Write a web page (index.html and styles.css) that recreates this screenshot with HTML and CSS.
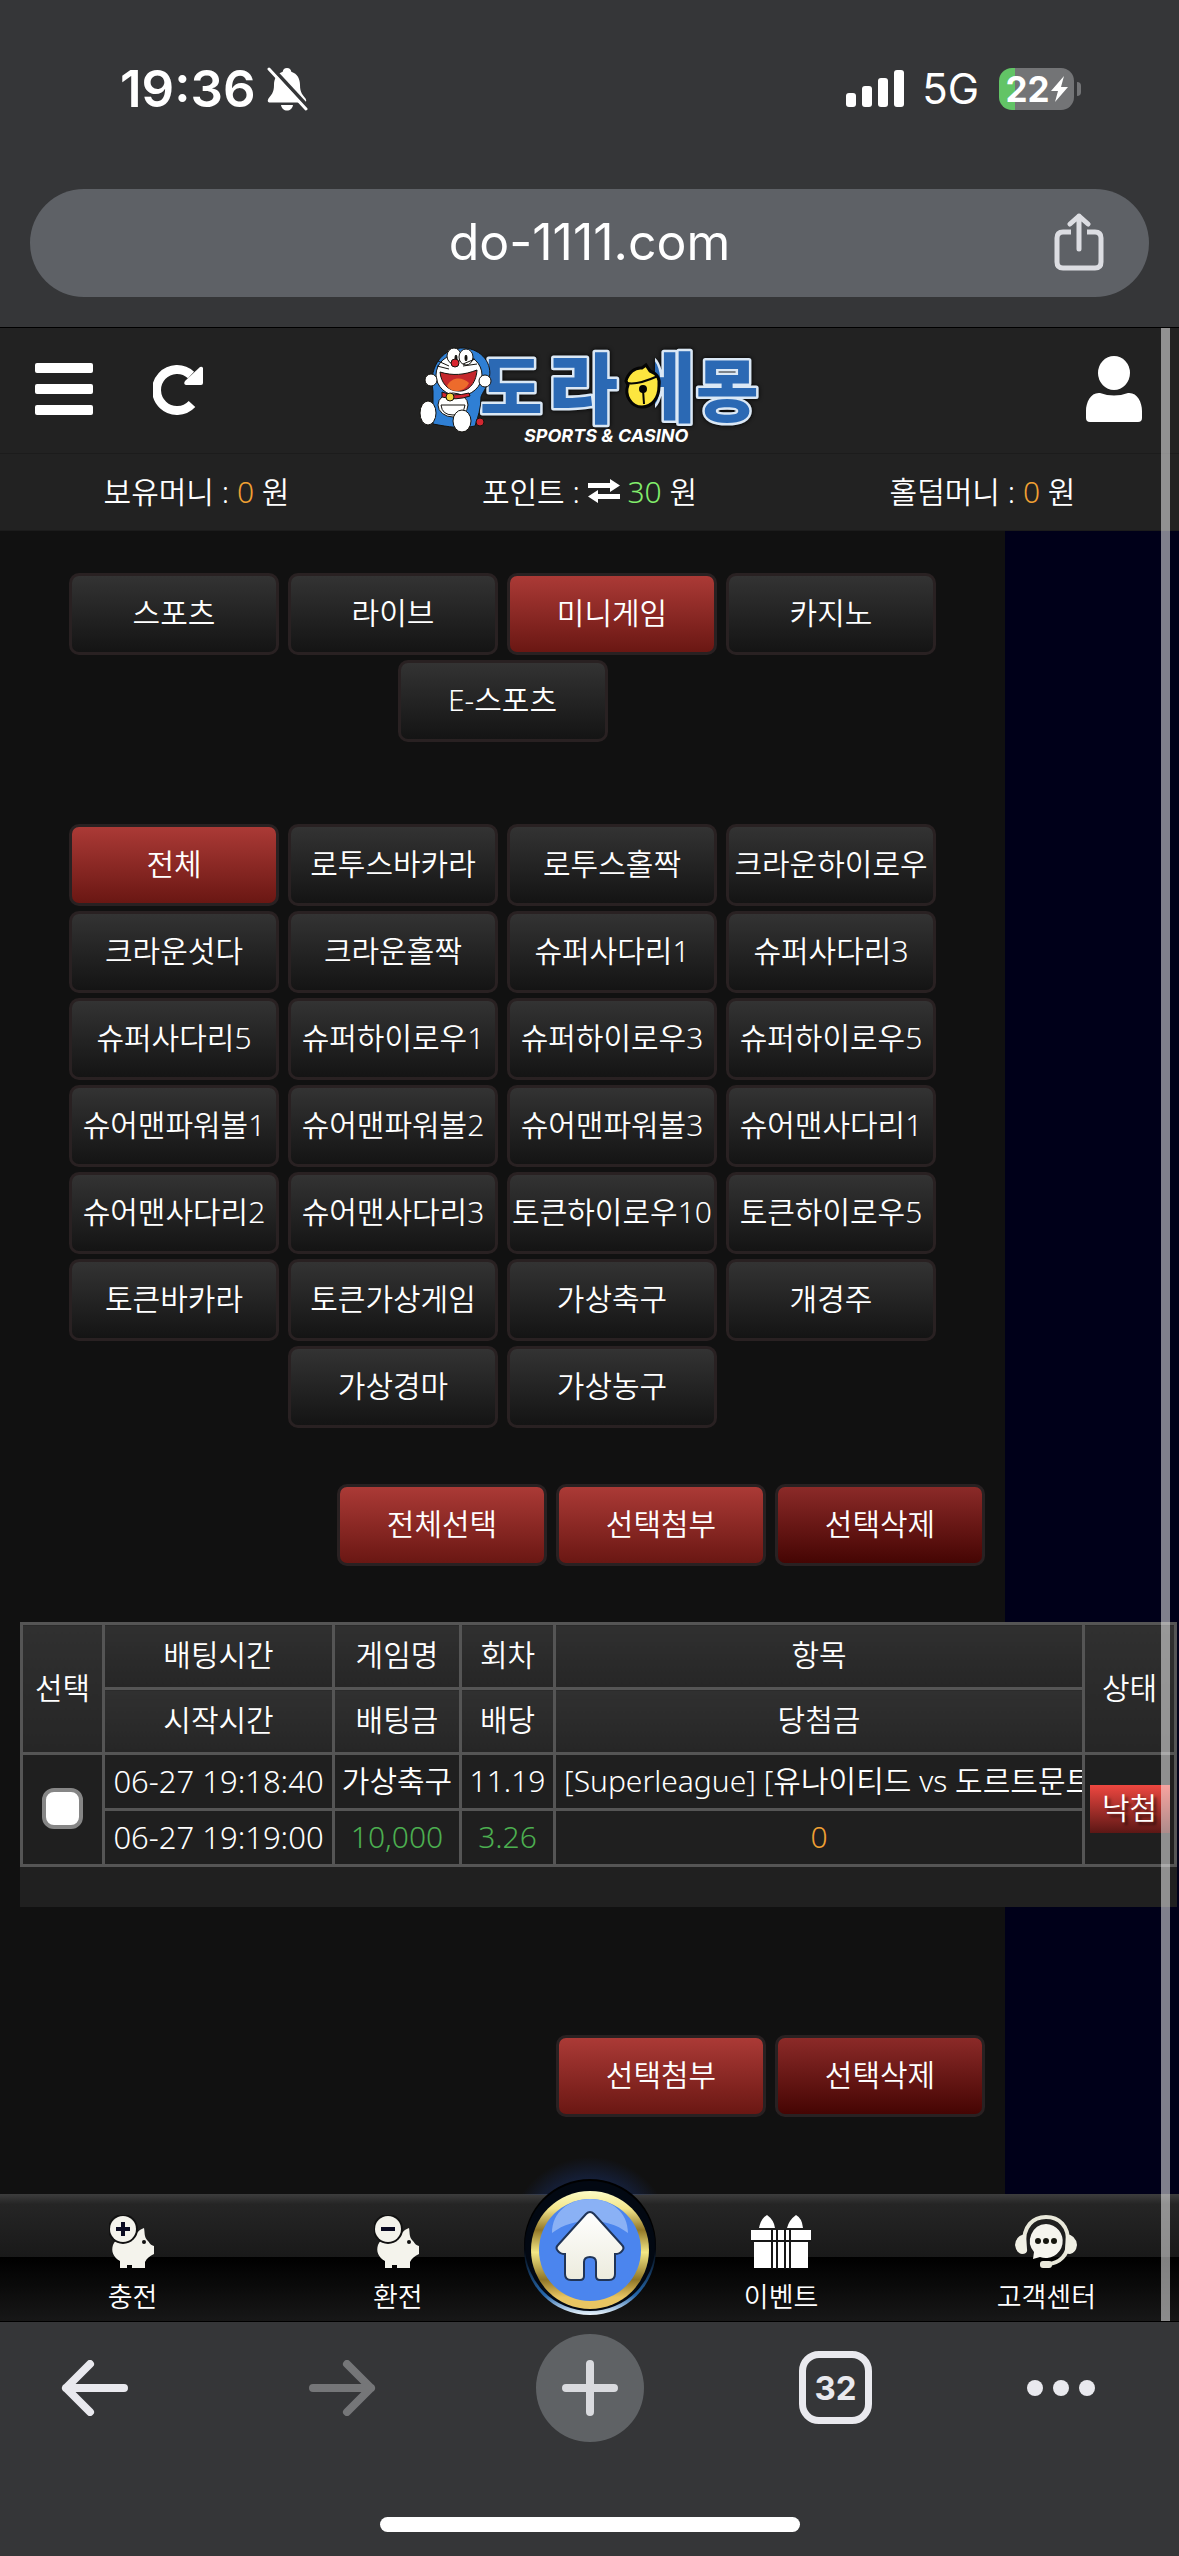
FILE: index.html
```html
<!DOCTYPE html>
<html lang="ko">
<head>
<meta charset="utf-8">
<meta name="viewport" content="width=device-width, initial-scale=1">
<title>do-1111.com</title>
<link rel="stylesheet" href="styles.css">
</head>
<body>
<div class="phone">
  <div class="status">
    <div class="status-group">
      <span class="time">19:36</span>
      <svg class="bell-off" viewBox="0 0 42 44" aria-hidden="true"><path d="M21 1c-2.600 0-4 1.700-4.300 3.800C10.500 6.800 8 12 8 18c0 8-3 10-5.500 13.500C1 34 2 35.500 4 35.500h34c2 0 3-1.500 1.500-4C37 28 34 26 34 18c0-6-2.500-11.200-8.700-13.200C25 2.700 23.600 1 21 1z" fill="#fff"/><path d="M15 38h12c-.5 3.500-3 5.500-6 5.500s-5.500-2-6-5.500z" fill="#fff"/><path d="M6 1l36 39" stroke="#353638" stroke-width="4"/><path d="M3 2l37 40" stroke="#fff" stroke-width="3" stroke-linecap="round"/></svg>
    </div>
    <div class="status-group">
      <svg class="signal" viewBox="0 0 58 38" aria-hidden="true" fill="#fff"><rect x="0" y="23" width="10" height="14" rx="3"/><rect x="16" y="16" width="10" height="21" rx="3"/><rect x="32" y="8" width="10" height="29" rx="3"/><rect x="48" y="0" width="10" height="37" rx="3"/></svg>
      <span class="network">5G</span>
      <span class="battery"><span>22</span><svg viewBox="0 0 17 26" aria-hidden="true"><path d="M13 0L0 15h7L4 26 17 11h-7z" fill="#fff"/></svg></span>
    </div>
  </div>
  <div class="address">
    <span class="url">do-1111.com</span>
    <button class="icon-btn share" aria-label="공유"><svg viewBox="0 0 50 58" fill="none" stroke="#dcdde2" stroke-width="5" stroke-linecap="round" stroke-linejoin="round"><path d="M17 19H9q-6 0-6 6v24q0 6 6 6h32q6 0 6-6V25q0-6-6-6h-8" stroke-linecap="butt"/><path d="M25 36V3M16 11L25 3l9 8"/></svg></button>
  </div>

  <div class="site">
    <header class="header">
      <div class="header-side">
        <button class="icon-btn menu" aria-label="메뉴"><svg viewBox="0 0 58 52" fill="#fff"><rect width="58" height="10" rx="2"/><rect y="21" width="58" height="10" rx="2"/><rect y="42" width="58" height="10" rx="2"/></svg></button>
        <button class="icon-btn reload" aria-label="새로고침"><svg viewBox="0 0 52 52"><path d="M38 12A20.500 20.500 0 1 0 39 41" fill="none" stroke="#fff" stroke-width="9"/><path d="M50 5v15q0 2-2 2H33q-3-1-1-4L47 4q2-1 3 1z" fill="#fff"/></svg></button>
      </div>
      <a class="logo" href="#" aria-label="도라에몽">
        <svg viewBox="0 0 338 100">
          <clipPath id="stem"><path d="M235-10h60v110h-60z"/></clipPath>
          <g class="logo-word">
            <text x="60" y="67">도</text><text class="wide" x="128" y="71">라</text><g clip-path="url(#stem)"><text class="wide" x="206" y="70">에</text></g><text x="276" y="70">몽</text>
          </g>
          <g stroke="#050505" stroke-width="2" fill="#fde63f"><path d="M206 35c2-8 9-14 16-13l4-3 4 6c8 3 10 9 9 15 0 12-7 21-17 21-11 0-18-12-14-22z" stroke-width="3"/><path d="M207 37c8 2 22-3 31-7" fill="none"/><circle cx="223" cy="43" r="3" fill="#050505"/><path d="M223 44l1 14"/></g>
          <g stroke="#15130f" stroke-width="1">
            <path d="M13 45C8 18 25 1 44 2c18 1 29 16 25 31-1 7-7 14-8 18 0 11-3 20-6 29-14 3-26 1-42-2z" fill="#2f7fd4"/>
            <ellipse cx="39" cy="29" rx="23" ry="21" fill="#fff"/>
            <ellipse cx="34" cy="10" rx="7" ry="8" fill="#fff"/><ellipse cx="46" cy="11" rx="7" ry="8" fill="#fff"/>
            <ellipse cx="36" cy="12" rx="1" ry="3"/><ellipse cx="46" cy="12" rx="1" ry="3"/>
            <circle cx="35" cy="17" r="4" fill="#d92530"/>
            <path d="M20 26c13 4 24 3 37-2-1 15-10 22-19 21-10 0-17-8-18-19z" fill="#c5272c"/>
            <path d="M27 40c4-9 15-10 22-3-4 9-17 11-22 3z" fill="#ed6b2c" stroke="none"/>
            <path d="M17 20l12 3M18 15l11 5M43 20l14-2M43 18l12-5" fill="none"/>
            <circle cx="11" cy="34" r="6" fill="#fff"/><circle cx="65" cy="35" r="6" fill="#fff"/>
            <ellipse cx="33" cy="59" rx="15" ry="12" fill="#fff"/>
            <path d="M21 59h24q-1 10-12 10T21 59z" fill="#fff"/>
            <path d="M22 46q12 5 27 1l1 3q-14 5-28 1z" fill="#d12731"/>
            <circle cx="30" cy="51" r="4" fill="#f3d43b"/>
            <ellipse cx="8" cy="67" rx="8" ry="12" fill="#fff"/><ellipse cx="42" cy="75" rx="9" ry="11" fill="#fff"/>
            <circle cx="60" cy="76" r="4" fill="#d12731"/>
          </g>
          <text class="logo-sub" x="104" y="96">SPORTS &amp; CASINO</text>
        </svg>
      </a>
      <div class="header-side header-right">
        <button class="icon-btn user" aria-label="내 정보"><svg viewBox="0 0 56 66" fill="#fff"><ellipse cx="28" cy="17" rx="16" ry="17"/><path d="M14 37q14 5 28 0c9-1 14 9 14 18v7q0 4-4 4H4q-4 0-4-4v-7c0-9 5-19 14-18z"/></svg></button>
      </div>
    </header>
    <div class="wallet">
      <span>보유머니 : <b class="orange">0</b> 원</span>
      <span>포인트 : <svg class="swap" viewBox="0 0 32 24" fill="#fff" aria-hidden="true"><path d="M0 4h22V0l10 6.500L22 13V9H0zM32 15H10v-4L0 17.500 10 24v-4h22z"/></svg> <b class="lime">30</b> 원</span>
      <span>홀덤머니 : <b class="orange">0</b> 원</span>
    </div>
    <main class="content">
      <div class="panel">
        <nav class="chips">
          <button class="btn">스포츠</button><button class="btn">라이브</button><button class="btn red">미니게임</button><button class="btn">카지노</button><button class="btn">E-스포츠</button>
        </nav>
        <nav class="chips games">
          <button class="btn red">전체</button><button class="btn">로투스바카라</button><button class="btn">로투스홀짝</button><button class="btn">크라운하이로우</button>
          <button class="btn">크라운섯다</button><button class="btn">크라운홀짝</button><button class="btn">슈퍼사다리1</button><button class="btn">슈퍼사다리3</button>
          <button class="btn">슈퍼사다리5</button><button class="btn">슈퍼하이로우1</button><button class="btn">슈퍼하이로우3</button><button class="btn">슈퍼하이로우5</button>
          <button class="btn">슈어맨파워볼1</button><button class="btn">슈어맨파워볼2</button><button class="btn">슈어맨파워볼3</button><button class="btn">슈어맨사다리1</button>
          <button class="btn">슈어맨사다리2</button><button class="btn">슈어맨사다리3</button><button class="btn">토큰하이로우10</button><button class="btn">토큰하이로우5</button>
          <button class="btn">토큰바카라</button><button class="btn">토큰가상게임</button><button class="btn">가상축구</button><button class="btn">개경주</button>
          <button class="btn">가상경마</button><button class="btn">가상농구</button>
        </nav>
        <div class="actions">
          <button class="btn red">전체선택</button><button class="btn red">선택첨부</button><button class="btn dark-red">선택삭제</button>
        </div>
      </div>
      <div class="table-wrap">
        <table class="bets">
          <colgroup><col class="c-check"><col class="c-time"><col class="c-game"><col class="c-round"><col><col class="c-state"></colgroup>
          <thead>
            <tr><th rowspan="2">선택</th><th>배팅시간</th><th>게임명</th><th>회차</th><th>항목</th><th rowspan="2">상태</th></tr>
            <tr><th>시작시간</th><th>배팅금</th><th>배당</th><th>당첨금</th></tr>
          </thead>
          <tbody>
            <tr><td rowspan="2"><input class="check" type="checkbox" aria-label="선택"></td><td class="when">06-27 19:18:40</td><td>가상축구</td><td>11.19</td><td class="item"><div>[Superleague] [유나이티드 vs 도르트문트]</div></td><td rowspan="2"><span class="lost">낙첨</span></td></tr>
            <tr><td class="when">06-27 19:19:00</td><td class="green">10,000</td><td class="green">3.26</td><td class="orange">0</td></tr>
          </tbody>
        </table>
      </div>
      <div class="panel lower">
        <div class="actions">
          <button class="btn red">선택첨부</button><button class="btn dark-red">선택삭제</button>
        </div>
      </div>
    </main>
    <nav class="tabs">
      <a href="#"><svg class="pig" viewBox="0 0 48 54" aria-hidden="true"><path d="M4 30c3-7 10-9 17-9 6 1 7-6 14-8 1 5 0 8 3 12 3 3 3 5 7 6v8c-4 2-7 4-9 8v6H23v-3h-5v3H11v-7C4 42 2 36 4 30z" fill="#f4f3ec"/><circle cx="35" cy="27" r="2" fill="#111"/><circle cx="14" cy="14" r="15" fill="#111"/><circle cx="14" cy="14" r="13" fill="#f4f3ec"/><path d="M14 7v14M7 14h14" stroke="#0b0b22" stroke-width="4"/></svg><span>충전</span></a>
      <a href="#"><svg class="pig" viewBox="0 0 48 54" aria-hidden="true"><path d="M4 30c3-7 10-9 17-9 6 1 7-6 14-8 1 5 0 8 3 12 3 3 3 5 7 6v8c-4 2-7 4-9 8v6H23v-3h-5v3H11v-7C4 42 2 36 4 30z" fill="#f4f3ec"/><circle cx="35" cy="27" r="2" fill="#111"/><circle cx="14" cy="14" r="15" fill="#111"/><circle cx="14" cy="14" r="13" fill="#f4f3ec"/><path d="M7 14h14" stroke="#0b0b22" stroke-width="4"/></svg><span>환전</span></a>
      <a href="#" class="home" aria-label="홈"><svg viewBox="0 0 180 160">
        <defs>
          <radialGradient id="glow"><stop offset=".6" stop-color="#1d3b86"/><stop offset="1" stop-color="#1d3b86" stop-opacity="0"/></radialGradient>
          <linearGradient id="rim" x2="0" y2="1"><stop offset=".5" stop-color="#02050b"/><stop offset=".85" stop-color="#2668ad"/><stop offset="1" stop-color="#eef8ff"/></linearGradient>
          <linearGradient id="gold" x2="0" y2="1"><stop offset="0" stop-color="#fdfcc5"/><stop offset=".15" stop-color="#f3e58b"/><stop offset=".33" stop-color="#927727"/><stop offset=".52" stop-color="#f4e884"/><stop offset=".75" stop-color="#8f7527"/><stop offset=".9" stop-color="#e8c562"/></linearGradient>
          <linearGradient id="house" x2="0" y2="1"><stop offset="0" stop-color="#fff"/><stop offset="1" stop-color="#ecebdd"/></linearGradient>
          <clipPath id="above"><path d="M0-20h180v54H0z"/></clipPath>
        </defs>
        <circle cx="90" cy="78" r="82" fill="url(#glow)" opacity=".5" clip-path="url(#above)"/><circle cx="90" cy="84" r="66" fill="#000"/>
        <circle cx="90" cy="88" r="66" fill="url(#rim)"/><circle cx="90" cy="85" r="65" fill="#020812"/>
        <circle cx="90" cy="89" r="59" fill="url(#gold)"/><circle cx="90" cy="89" r="51" fill="#4b85ee"/>
        <path d="M52 72c0-21 17-34 38-34s38 13 38 34c-12-9-24-12-38-12s-26 3-38 12z" fill="#8ab1f5"/>
        <path d="M86 53q4-4 8 0l28 31q3 3 0 6-2 3-7 3v20q0 6-6 6h-9q-4 0-4-4V101q0-5-6-5t-6 5v14q0 4-4 4h-9q-6 0-6-6V93q-5 0-7-3-3-3 0-6z" fill="url(#house)" stroke="#203457" stroke-width="2"/>
      </svg></a>
      <a href="#"><svg class="gift" viewBox="0 0 60 54" aria-hidden="true" fill="#fff"><path d="M8 13q2-10 8-13 7 5 8 13zM36 13q2-8 9-13 6 3 7 13z"/><path d="M0 15h60v10H0z"/><path d="M3 27h54v26H3z"/><path d="M21 14v40M26 14v40M34 14v40M39 14v40M0 26h60" stroke="#171717" stroke-width="2"/></svg><span>이벤트</span></a>
      <a href="#"><svg class="support" viewBox="0 0 62 54" aria-hidden="true"><path d="M9 30C8 11 18 2 31 2s23 9 22 26c0 12-8 20-20 21" fill="none" stroke="#e9e8da" stroke-width="4"/><path d="M11 19q-10 1-11 11 1 8 7 9 6 0 5-5zM51 19q10 1 11 11-1 8-7 9-6 0-5-5z" fill="#f0efe4"/><rect x="25" y="46" width="12" height="7" rx="3" fill="#e9e8da"/><path d="M31 9a17 17 0 1 1-6 33l-7 2 1-7A17 17 0 0 1 31 9z" fill="#f5f4ee"/><g fill="#16160f"><circle cx="23" cy="26" r="3"/><circle cx="31" cy="26" r="3"/><circle cx="39" cy="26" r="3"/></g></svg><span>고객센터</span></a>
    </nav>
    <div class="scrollbar"></div>
  </div>

  <div class="toolbar">
    <button class="icon-btn" aria-label="뒤로"><svg class="arrow" viewBox="0 0 68 56" fill="none" stroke="#e9e9ee" stroke-width="8" stroke-linecap="round" stroke-linejoin="round"><path d="M63 28H5M29 4L5 28l24 24"/></svg></button>
    <button class="icon-btn" aria-label="앞으로"><svg class="arrow" viewBox="0 0 68 56" fill="none" stroke="#757678" stroke-width="8" stroke-linecap="round" stroke-linejoin="round"><path d="M5 28h58M39 4l24 24-24 24"/></svg></button>
    <button class="icon-btn plus" aria-label="새 탭"><svg viewBox="0 0 56 56" stroke="#d9dade" stroke-width="8" stroke-linecap="round"><path d="M28 4v48M4 28h48"/></svg></button>
    <button class="icon-btn tab-count" aria-label="탭 32개">32</button>
    <button class="icon-btn" aria-label="더보기"><svg class="dots" viewBox="0 0 68 16" fill="#e9e9ee"><circle cx="8" cy="8" r="8"/><circle cx="34" cy="8" r="8"/><circle cx="60" cy="8" r="8"/></svg></button>
  </div>
  <div class="indicator"></div>
</div>
</body>
</html>
```
FILE: styles.css
```css
* { box-sizing: border-box; }
body {
  margin: 0;
  background: #353638;
  color: #fff;
  font: 350 30px/40px "Noto Sans", "Noto Sans CJK KR", sans-serif;
}
button { font: inherit; color: inherit; cursor: pointer; }
a { color: inherit; text-decoration: none; }
svg { display: block; }
.icon-btn { padding: 0; border: 0; background: none; }
.phone { min-height: 100vh; overflow: hidden; }

/* Browser chrome */
.status {
  display: flex;
  align-items: center;
  justify-content: space-between;
  height: 177px;
  padding: 0 98px 0 120px;
  font-family: Inter, sans-serif;
}
.status-group { display: flex; align-items: center; }
.time { font-size: 51px; font-weight: 600; }
.bell-off { width: 42px; height: 44px; margin-left: 10px; }
.signal { width: 58px; height: 38px; }
.network { margin: 0 20px 0 18px; font-size: 42px; font-weight: 400; }
.battery {
  position: relative;
  display: flex;
  align-items: center;
  justify-content: center;
  gap: 1px;
  width: 75px;
  height: 42px;
  border-radius: 13px;
  background: linear-gradient(90deg, #62c466 22%, #737476 22%);
  font-size: 35px;
  font-weight: 700;
}
.battery svg { width: 17px; height: 26px; }
.battery::after {
  content: "";
  position: absolute;
  right: -7px;
  width: 4px;
  height: 14px;
  border-radius: 0 4px 4px 0;
  background: #737476;
}
.status-group:last-child { padding-right: 7px; }
.address {
  position: relative;
  display: flex;
  align-items: center;
  justify-content: center;
  height: 108px;
  margin: 12px 30px 30px;
  padding-bottom: 2px;
  border-radius: 54px;
  background: #5e6166;
  font: 400 50px/60px Inter, sans-serif;
}
.share { position: absolute; right: 45px; }
.share svg { width: 50px; height: 58px; }

/* Site */
.site { position: relative; border-top: 1px solid #000; border-bottom: 1px solid #000; background: #000019; }
.header {
  display: flex;
  align-items: center;
  height: 126px;
  padding: 0 37px 4px 35px;
  border-bottom: 1px solid #1c1c1c;
  background: #222;
}
.header-side { display: flex; flex: 1; align-items: center; gap: 60px; }
.header-right { justify-content: flex-end; }
.menu svg { width: 58px; height: 52px; }
.reload svg { width: 52px; height: 52px; }
.user svg { width: 56px; height: 66px; }
.logo { padding-top: 14px; }
.logo svg { width: 338px; height: 100px; overflow: visible; }
.logo-word {
  fill: #2b69b4;
  stroke: #dbe8f5;
  stroke-width: 5px;
  stroke-linejoin: round;
  paint-order: stroke;
  font-family: "Noto Sans CJK KR", sans-serif;
  font-size: 68px;
  font-weight: 900;
  filter: drop-shadow(0 0 2px #000);
}
.logo-word .wide { font-size: 76px; }
.logo-sub { fill: #fff; font: italic 700 18px Inter, sans-serif; }
.wallet {
  display: grid;
  grid-template-columns: repeat(3, 1fr);
  height: 77px;
  border-bottom: 1px solid #1c1c1c;
  background: #222;
  line-height: 76px;
  text-align: center;
}
.wallet b { font-weight: inherit; }
.swap { display: inline-block; width: 32px; height: 24px; }
.orange, .wallet .orange { color: #f0a033; }
.lime { color: #82ee6c; }
.green { color: #4caf50; }
.content { background: linear-gradient(90deg, #111 1005px, #000019 1005px); }
.panel { max-width: 1005px; padding: 42px 0 0; }
.chips { display: flex; flex-wrap: wrap; justify-content: center; gap: 5px 9px; padding: 0 60px; }
.games { margin-top: 82px; }
.btn {
  width: 210px;
  height: 82px;
  padding: 0 0 3px;
  border: 3px solid #292122;
  border-radius: 10px;
  background: linear-gradient(#333, #141414);
  white-space: nowrap;
}
.red { background: linear-gradient(#ab3a36, #6a1713); }
.dark-red { background: linear-gradient(#8b2a28, #450503); }
.actions { display: flex; justify-content: flex-end; gap: 9px; padding: 56px 20px; }
.table-wrap { margin: 0 2px 0 20px; padding-bottom: 40px; background: #202020; }
.bets { width: 100%; border-collapse: collapse; table-layout: fixed; text-align: center; }
.c-check { width: 82px; }
.c-time { width: 230px; }
.c-game { width: 127px; }
.c-round { width: 94px; }
.c-state { width: 92px; }
.bets th, .bets td { height: 65px; padding: 0 0 2px; border: 3px solid #555; font-weight: inherit; white-space: nowrap; }
.bets th { background: linear-gradient(#303030, #262626); }
.bets td { height: 56px; background: #1f1f1f; }
.bets .when { font-size: 31px; }
.item div { overflow: hidden; padding-left: 8px; text-align: left; }
.check {
  appearance: none;
  display: block;
  width: 41px;
  height: 41px;
  margin: 0 auto;
  border: 4px solid #868686;
  border-radius: 12px;
  background: #fff;
}
.lost {
  display: block;
  width: 80px;
  height: 48px;
  margin: 0 auto;
  background: linear-gradient(#ee4740, #5c1715);
  line-height: 46px;
  text-shadow: 3px 3px 3px #0008;
}
.lower { padding-top: 72px; }
.lower .actions { padding-bottom: 77px; }

/* Bottom menu */
.tabs {
  display: grid;
  grid-template: 127px / 1fr 1fr 118px 1fr 1fr;
  background: linear-gradient(#3d3d3d, #252525 8%, #191919 50%, #000 50%, #171717);
  font-size: 27px;
}
.tabs a { display: flex; flex-direction: column; align-items: center; justify-content: flex-end; gap: 8px; min-height: 0; padding-bottom: 4px; }
.pig { width: 48px; height: 54px; }
.gift { width: 60px; height: 54px; }
.support { width: 62px; height: 54px; }
.tabs .home { padding: 0; }
.home svg { flex-shrink: 0; width: 180px; height: 160px; overflow: visible; }
.scrollbar { position: absolute; top: 0; right: 9px; bottom: 0; width: 9px; background: #ffffff80; }

/* Browser toolbar */
.toolbar {
  display: grid;
  grid-template-columns: 247fr 228fr 263fr 228fr 70fr;
  align-items: center;
  justify-items: start;
  height: 131px;
  padding: 0 82px 0 61px;
}
.arrow { width: 68px; height: 56px; }
.plus { display: grid; place-items: center; width: 108px; height: 108px; border-radius: 50%; background: #5f6265; }
.plus svg { width: 56px; height: 56px; }
.tab-count { width: 73px; height: 73px; border: 7px solid #e9e9ee; border-radius: 20px; color: #e9e9ee; font: 700 33px/50px Inter, sans-serif; }
.dots { width: 68px; height: 16px; }
.indicator { width: 420px; height: 15px; margin: 64px auto 24px; border-radius: 8px; background: #fff; }
```
